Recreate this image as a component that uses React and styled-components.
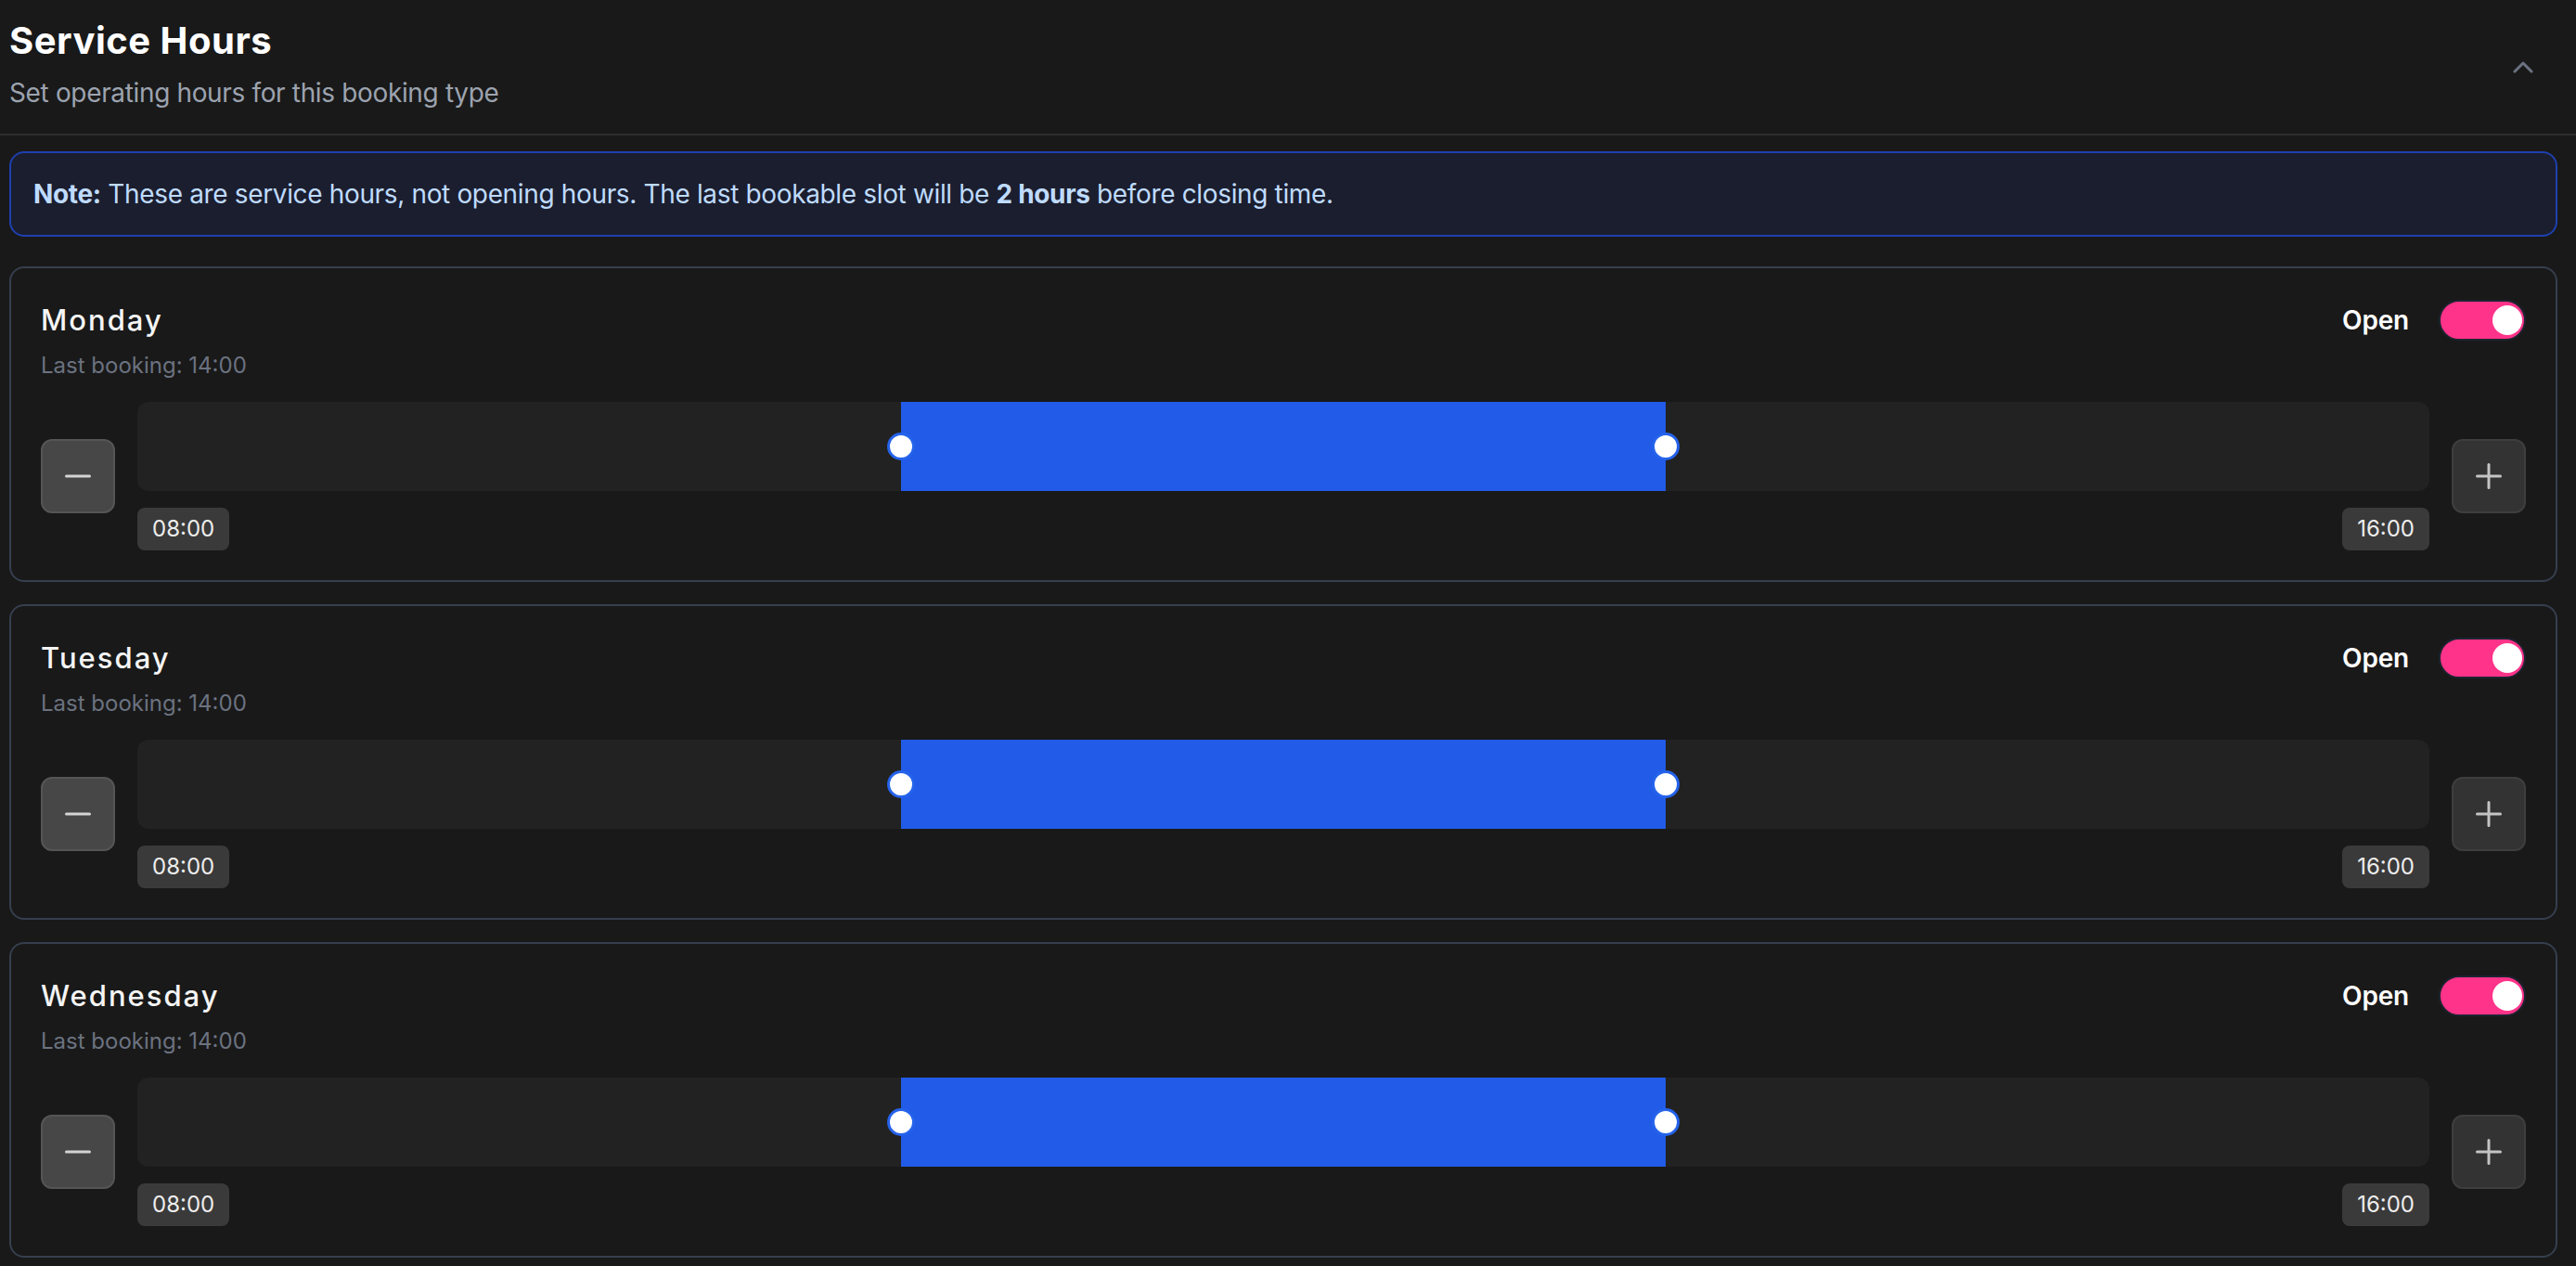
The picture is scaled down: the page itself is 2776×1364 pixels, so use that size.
import React, { useState } from 'react';
import styled, { createGlobalStyle } from 'styled-components';

const GlobalStyle = createGlobalStyle`
  html, body {
    margin: 0;
    background: #191919;
  }
  body {
    font-family: Inter, "Liberation Sans", sans-serif;
    color: #f5f5f5;
  }
  * { box-sizing: border-box; }
`;

const Page = styled.div`
  min-height: 100vh;
  background: #191919;
`;

const Header = styled.header`
  display: flex;
  justify-content: space-between;
  align-items: center;
  padding: 16px 46px 24px 10px;
  border-bottom: 2px solid #2e2e2e;
`;

const Title = styled.h1`
  margin: 0;
  font-size: 40px;
  line-height: 56px;
  font-weight: 700;
  letter-spacing: 0.5px;
  color: #ffffff;
`;

const Subtitle = styled.p`
  margin: 8px 0 0;
  font-size: 28px;
  line-height: 40px;
  letter-spacing: -0.35px;
  color: #9ca3af;
`;

const Collapse = styled.button`
  display: flex;
  align-items: center;
  justify-content: center;
  margin-top: 8px;
  padding: 0;
  border: none;
  background: none;
  color: #6b7280;
  cursor: pointer;
`;

const Content = styled.main`
  display: flex;
  flex-direction: column;
  gap: 24px;
  padding: 17px 20px 0 10px;
`;

const Note = styled.div`
  margin-bottom: 8px;
  padding: 24px;
  border: 2px solid #1e40af;
  border-radius: 16px;
  background: #1b1e2e;
  font-size: 28px;
  line-height: 40px;
  letter-spacing: -0.35px;
  color: #bfdbfe;

  strong {
    font-weight: 700;
  }
`;

const Card = styled.section`
  padding: 32px;
  border: 2px solid #363f4e;
  border-radius: 16px;
  background: #191919;
`;

const CardHead = styled.div`
  display: flex;
  justify-content: space-between;
  align-items: center;
  height: 48px;
`;

const DayName = styled.h3`
  margin: 0;
  font-size: 31px;
  line-height: 48px;
  font-weight: 500;
  letter-spacing: 2px;
  color: #f5f5f5;
`;

const Status = styled.div`
  display: flex;
  align-items: center;
  gap: 32px;
`;

const StatusLabel = styled.span`
  font-size: 28px;
  font-weight: 600;
  letter-spacing: -0.2px;
  color: #ffffff;
`;

const Switch = styled.button`
  position: relative;
  flex: 0 0 94px;
  width: 94px;
  height: 44px;
  padding: 0;
  border: 2px solid #1d2431;
  border-radius: 22px;
  background: ${p => (p.$on ? '#ff3389' : '#3a3a3a')};
  cursor: pointer;
`;

const Knob = styled.span`
  position: absolute;
  top: 50%;
  ${p => (p.$on ? 'right: 2px;' : 'left: 2px;')}
  width: 32px;
  height: 32px;
  border-radius: 50%;
  background: #ffffff;
  transform: translateY(-50%);
`;

const LastBooking = styled.div`
  margin-top: 9px;
  font-size: 24px;
  line-height: 32px;
  color: #6b7280;
`;

const SliderRow = styled.div`
  display: flex;
  align-items: center;
  gap: 24px;
  margin-top: 23px;
`;

const StepButton = styled.button`
  display: flex;
  flex: 0 0 80px;
  align-items: center;
  justify-content: center;
  height: 80px;
  padding: 0;
  border: 2px solid ${p => (p.$light ? '#555555' : '#3e3e3e')};
  border-radius: 12px;
  background: ${p => (p.$light ? '#474747' : '#333333')};
  color: ${p => (p.$light ? '#d4d4d4' : '#c4c4c4')};
  cursor: pointer;
`;

const TrackColumn = styled.div`
  display: flex;
  flex: 1;
  flex-direction: column;
  gap: 18px;
`;

const Track = styled.div`
  position: relative;
  height: 96px;
  border-radius: 12px;
  background: #222222;
`;

const Range = styled.div`
  position: absolute;
  top: 0;
  bottom: 0;
  background: #215be8;
`;

const Handle = styled.span`
  position: absolute;
  top: 50%;
  ${p => (p.$end ? 'right: 0;' : 'left: 0;')}
  width: 30px;
  height: 30px;
  border: 3px solid #2563eb;
  border-radius: 50%;
  background: #ffffff;
  transform: translate(${p => (p.$end ? '50%' : '-50%')}, -50%);
`;

const Labels = styled.div`
  display: flex;
  justify-content: space-between;
`;

const TimeTag = styled.span`
  padding: 7px 16px;
  border-radius: 8px;
  background: #3a3a3a;
  font-size: 24px;
  line-height: 32px;
  color: #ededed;
`;

const Icon = ({ d }) => (
  <svg width="28" height="28" viewBox="0 0 28 28" fill="none" stroke="currentColor" strokeWidth="3" strokeLinecap="round">
    <path d={d} />
  </svg>
);

const ChevronUp = () => (
  <svg width="22" height="14" viewBox="0 0 22 14" fill="none" stroke="currentColor" strokeWidth="3" strokeLinecap="round" strokeLinejoin="round">
    <path d="M2 12 L11 3 L20 12" />
  </svg>
);

const pad = n => `${String(n).padStart(2, '0')}:00`;

const initialDays = [
  { name: 'Monday', open: true, start: 8, end: 16 },
  { name: 'Tuesday', open: true, start: 8, end: 16 },
  { name: 'Wednesday', open: true, start: 8, end: 16 },
];

const DayCard = ({ day, onToggle }) => (
  <Card>
    <CardHead>
      <DayName>{day.name}</DayName>
      <Status>
        <StatusLabel>{day.open ? 'Open' : 'Closed'}</StatusLabel>
        <Switch $on={day.open} onClick={onToggle} aria-label="toggle">
          <Knob $on={day.open} />
        </Switch>
      </Status>
    </CardHead>
    <LastBooking>Last booking: {pad(day.end - 2)}</LastBooking>
    <SliderRow>
      <StepButton $light aria-label="decrease">
        <Icon d="M1.5 14 H26.5" />
      </StepButton>
      <TrackColumn>
        <Track>
          <Range style={{ left: `${(day.start / 24) * 100}%`, width: `${((day.end - day.start) / 24) * 100}%` }}>
            <Handle />
            <Handle $end />
          </Range>
        </Track>
        <Labels>
          <TimeTag>{pad(day.start)}</TimeTag>
          <TimeTag>{pad(day.end)}</TimeTag>
        </Labels>
      </TrackColumn>
      <StepButton aria-label="increase">
        <Icon d="M1.5 14 H26.5 M14 1.5 V26.5" />
      </StepButton>
    </SliderRow>
  </Card>
);

const App = () => {
  const [days, setDays] = useState(initialDays);

  const toggle = i => setDays(ds => ds.map((d, j) => (j === i ? { ...d, open: !d.open } : d)));

  return (
    <Page>
      <GlobalStyle />
      <Header>
        <div>
          <Title>Service Hours</Title>
          <Subtitle>Set operating hours for this booking type</Subtitle>
        </div>
        <Collapse aria-label="collapse">
          <ChevronUp />
        </Collapse>
      </Header>
      <Content>
        <Note>
          <strong>Note:</strong> These are service hours, not opening hours. The last bookable slot will be <strong>2 hours</strong> before closing time.
        </Note>
        {days.map((day, i) => (
          <DayCard key={day.name} day={day} onToggle={() => toggle(i)} />
        ))}
      </Content>
    </Page>
  );
};

export default App;
